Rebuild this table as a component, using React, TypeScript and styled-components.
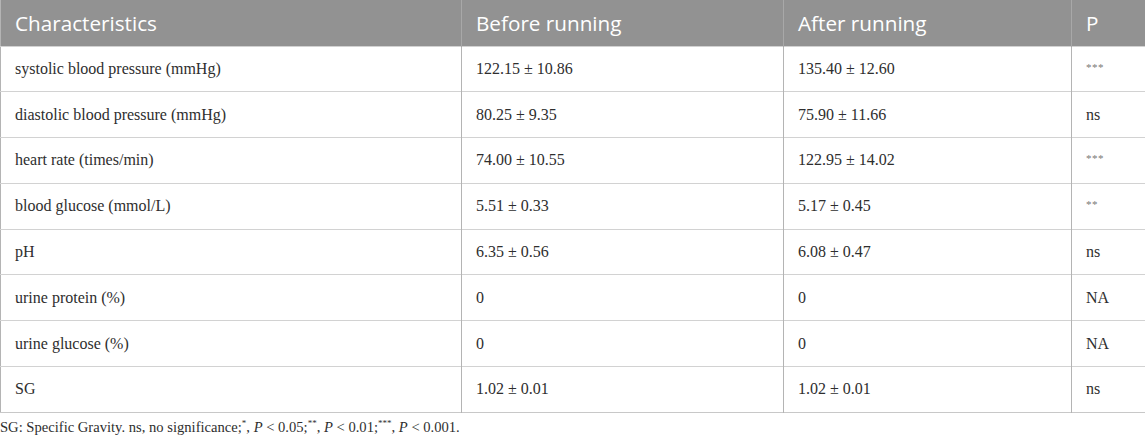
import React from "react";
import styled, { createGlobalStyle } from "styled-components";

const Global = createGlobalStyle`
  html, body { margin: 0; padding: 0; background: #ffffff; }
  body { width: 1145px; height: 439px; overflow: hidden; }
`;

const Wrap = styled.div`
  width: 1145px;
  display: flex;
  flex-direction: column;
`;

const Table = styled.table`
  width: 1145px;
  border-collapse: collapse;
  table-layout: fixed;
  border-left: 1px solid #b4b4b4;
  border-right: 1px solid #b4b4b4;
  border-bottom: 1px solid #c8c8c8;
`;

const HeadCell = styled.th<{ $w: number }>`
  width: ${(p) => p.$w}px;
  height: 46px;
  box-sizing: border-box;
  background: #929292;
  color: #ffffff;
  font-family: "Open Sans", sans-serif;
  font-weight: 400;
  font-size: 20.7px;
  text-align: left;
  padding: 1px 0 0 14px;
  border-left: 1px solid #a8a8a8;
  &:first-child { border-left: none; }
`;

const Row = styled.tr`
  border-top: 1px solid #d2d2d2;
  height: 45.8px;
`;

const Cell = styled.td`
  box-sizing: border-box;
  font-family: "Liberation Serif", serif;
  font-size: 16px;
  color: #2e2e2e;
  padding: 0 0 0 14px;
  border-left: 1px solid #b4b4b4;
  &:first-child { border-left: none; }
  white-space: nowrap;
`;

const Stars = styled.span`
  font-size: 11px;
  color: #777777;
  position: relative;
  top: -3px;
  letter-spacing: 0.5px;
`;

const Note = styled.p`
  margin: 5px 0 0 0;
  font-family: "Liberation Serif", serif;
  font-size: 14.6px;
  color: #2e2e2e;
`;

const Sup = styled.sup`
  font-size: 9px;
`;

type R = [string, string, string, string];
const rows: R[] = [
  ["systolic blood pressure (mmHg)", "122.15 ± 10.86", "135.40 ± 12.60", "***"],
  ["diastolic blood pressure (mmHg)", "80.25 ± 9.35", "75.90 ± 11.66", "ns"],
  ["heart rate (times/min)", "74.00 ± 10.55", "122.95 ± 14.02", "***"],
  ["blood glucose (mmol/L)", "5.51 ± 0.33", "5.17 ± 0.45", "**"],
  ["pH", "6.35 ± 0.56", "6.08 ± 0.47", "ns"],
  ["urine protein (%)", "0", "0", "NA"],
  ["urine glucose (%)", "0", "0", "NA"],
  ["SG", "1.02 ± 0.01", "1.02 ± 0.01", "ns"],
];

export default function App() {
  return (
    <Wrap>
      <Global />
      <Table>
        <thead>
          <tr>
            <HeadCell $w={461}>Characteristics</HeadCell>
            <HeadCell $w={322}>Before running</HeadCell>
            <HeadCell $w={288}>After running</HeadCell>
            <HeadCell $w={74}>P</HeadCell>
          </tr>
        </thead>
        <tbody>
          {rows.map((r) => (
            <Row key={r[0]}>
              <Cell>{r[0]}</Cell>
              <Cell>{r[1]}</Cell>
              <Cell>{r[2]}</Cell>
              <Cell>{r[3].startsWith("*") ? <Stars>{r[3]}</Stars> : r[3]}</Cell>
            </Row>
          ))}
        </tbody>
      </Table>
      <Note>
        SG: Specific Gravity. ns, no significance;<Sup>*</Sup>, <i>P</i> &lt; 0.05;<Sup>**</Sup>, <i>P</i> &lt; 0.01;<Sup>***</Sup>, <i>P</i> &lt; 0.001.
      </Note>
    </Wrap>
  );
}
